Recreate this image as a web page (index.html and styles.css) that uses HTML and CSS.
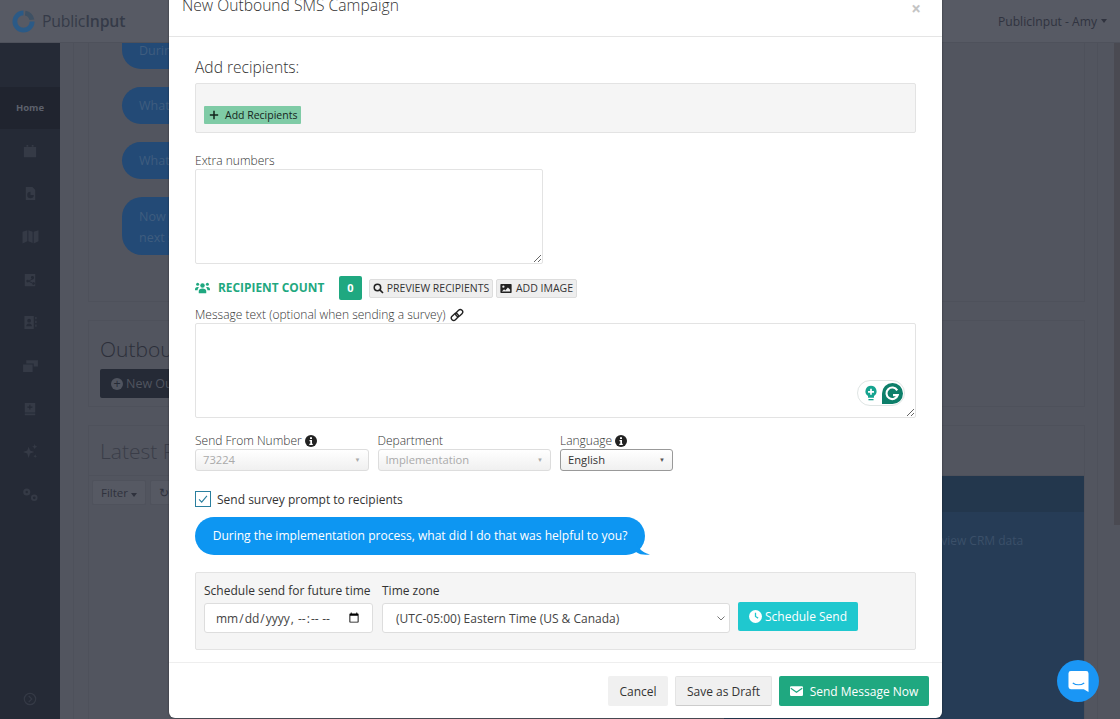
FILE: index.html
```html
<!DOCTYPE html>
<html lang="en">
<head>
<meta charset="utf-8">
<title>New Outbound SMS Campaign</title>
<link rel="stylesheet" href="styles.css">
</head>
<body>
<header class="topbar">
  <div class="logo">
    <svg class="logo-mark" viewBox="0 0 24 24" width="23" height="23"><path d="M12 .5a11.500 11.500 0 1 0 11.500 11.500h-5A6.500 6.500 0 1 1 12 5.500z" fill="#2b5a86"/><path d="M14 .7A11.500 11.500 0 0 1 23.300 10l-5 .5A6.500 6.500 0 0 0 13.500 5.700z" fill="#3e5164"/></svg>
    <span class="logo-text">Public<b>Input</b></span>
  </div>
  <div class="user">PublicInput - Amy <span class="caret"></span></div>
</header>
<div class="shell">
  <nav class="sidebar">
    <div class="side-home">Home</div>
    <ul class="side-icons">
      <li><svg viewBox="0 0 16 16" width="14" height="14"><path d="M1 3.500h14V15H1zM4 1h2v2H4zM10 1h2v2h-2z"/></svg></li>
      <li><svg viewBox="0 0 16 16" width="15" height="15"><path fill-rule="evenodd" d="M3 1h7l3 3v11H3zM8 6a3.500 3.500 0 1 0 3.500 3.500H8z"/></svg></li>
      <li><svg viewBox="0 0 16 16" width="17" height="17"><path d="M.5 3.500l4.500-1.500v10.500L.5 14.500zM6 2l4 1.500V14l-4-1.500zM11 3.500L15.500 2v10.500L11 14.500z"/></svg></li>
      <li><svg viewBox="0 0 16 16" width="14" height="14"><path fill-rule="evenodd" d="M2 1h12v14H2zM10.500 3.500a1.500 1.500 0 1 0 .1 3l-4 2a1.500 1.500 0 1 0 0 1.500l4 2a1.500 1.500 0 1 0 .4-1l-3.700-1.800 3.700-1.900a1.500 1.500 0 0 0-.5-3.800z"/></svg></li>
      <li><svg viewBox="0 0 16 16" width="15" height="15"><path fill-rule="evenodd" d="M1.500 1h10v14h-10zM6.500 4a2 2 0 1 0 0 4 2 2 0 0 0 0-4zM3.500 12h6c0-2-1.500-3-3-3s-3 1-3 3zM13 2h1.500v2.500H13zM13 6h1.500v2.500H13zM13 10h1.500v2.500H13z"/></svg></li>
      <li><svg viewBox="0 0 16 16" width="17" height="17"><path d="M1 7h9v7H1zM4 3h11v6h-4V6H4z"/></svg></li>
      <li><svg viewBox="0 0 16 16" width="14" height="14"><path fill-rule="evenodd" d="M2 1h12v11H2zM7.200 3v2.200H5v1.300h2.200v2.200h1.300V6.500h2.200V5.200H8.500V3zM2 13.200h12V15H2z"/></svg></li>
      <li><svg viewBox="0 0 16 16" width="15" height="15"><path d="M6 3l1.500 4L12 8.500 7.500 10 6 15l-1.500-5L0 8.500 4.500 7zM12.500 0l.8 2 2 .8-2 .8-.8 2-.8-2-2-.8 2-.8zM13 11l.6 1.400 1.400.6-1.400.6L13 15l-.6-1.400-1.400-.6 1.400-.6z"/></svg></li>
      <li><svg viewBox="0 0 18 16" width="17" height="15"><path fill-rule="evenodd" d="M5 1.500a3.800 3.800 0 1 0 0 7.600 3.800 3.800 0 0 0 0-7.600zM5 4a1.300 1.300 0 1 1 0 2.600A1.300 1.300 0 0 1 5 4z"/><path fill-rule="evenodd" d="M13 8a3.500 3.500 0 1 0 0 7 3.500 3.500 0 0 0 0-7zM13 10a1.500 1.500 0 1 1 0 3 1.500 1.500 0 0 1 0-3z"/></svg></li>
    </ul>
    <div class="side-toggle"><svg viewBox="0 0 16 16" width="14" height="14"><circle cx="8" cy="8" r="6.500" fill="none" stroke-width="1.400"/><path d="M6.500 4.500L10 8l-3.500 3.500" fill="none" stroke-width="1.400"/></svg></div>
  </nav>
  <main class="content">
    <div class="content-inner">
      <section class="card chat-card">
        <div class="chat-bubble">During the implementation process</div>
        <div class="chat-bubble">What did I do that was helpful</div>
        <div class="chat-bubble">What could be improved</div>
        <div class="chat-bubble tall">Now that you have finished, what is the<br>next step for your team</div>
      </section>
      <section class="card outbound-card">
        <h2 class="bg-title">Outbound SMS</h2>
        <div class="bg-new"><span class="bg-plus">+</span>New Outbound</div>
      </section>
      <section class="card latest-card">
        <h2 class="bg-title latest-title">Latest Responses</h2>
        <div class="toolbar">
          <span class="bg-tool">Filter <span class="caret"></span></span>
          <span class="bg-tool">&#8635;</span>
        </div>
        <div class="table">
          <div class="table-head"></div>
          <div class="table-row">Review CRM data</div>
        </div>
      </section>
    </div>
  </main>
  <div class="scrollbar"></div>
</div>

<div class="modal" role="dialog">
  <div class="modal-head">
    <h1 class="modal-title">New Outbound SMS Campaign</h1>
    <span class="modal-close">×</span>
  </div>
  <div class="modal-body">
    <h3 class="section-title">Add recipients:</h3>
    <div class="well recipients-well">
      <button class="btn-add"><svg viewBox="0 0 12 12" width="10" height="10"><path d="M5.100 1h1.800v4.100H11v1.800H6.900V11H5.100V6.900H1V5.100h4.100z" fill="#12231b"/></svg>Add Recipients</button>
    </div>
    <label class="field-label extra-label">Extra numbers</label>
    <textarea class="area extra-area"></textarea>

    <div class="count-row">
      <svg class="count-icon" viewBox="0 0 20 16" width="15" height="12"><g fill="#1fa880"><circle cx="10" cy="4.500" r="3"/><circle cx="3.500" cy="3" r="2"/><circle cx="16.500" cy="3" r="2"/><path d="M5 15v-3c0-2 2-3.500 5-3.500s5 1.500 5 3.500v3zM0 10c0-2 1-3.500 3.500-3.500 1 0 1.500.3 2 .7C4 8.200 3.500 9.500 3.500 11H0zM20 10c0-2-1-3.500-3.500-3.500-1 0-1.500.3-2 .7 1.500 1 2 2.300 2 3.800H20z"/></g></svg>
      <span class="count-label">RECIPIENT COUNT</span>
      <span class="count-badge">0</span>
      <button class="btn-mini preview"><svg viewBox="0 0 16 16" width="11" height="11"><circle cx="6.500" cy="6.500" r="4.700" fill="none" stroke="#222" stroke-width="2.200"/><path d="M10 10l4.500 4.500" stroke="#222" stroke-width="2.400"/></svg>PREVIEW RECIPIENTS</button>
      <button class="btn-mini add-image"><svg viewBox="0 0 16 14" width="12" height="11"><path d="M1.500 1h13a1 1 0 0 1 1 1v10a1 1 0 0 1-1 1h-13a1 1 0 0 1-1-1V2a1 1 0 0 1 1-1z" fill="#222"/><circle cx="4.500" cy="4.500" r="1.500" fill="#eee"/><path d="M2.500 11l3-3 1.500 1.500L10.500 5.500l3 3V11z" fill="#eee"/></svg>ADD IMAGE</button>
    </div>

    <label class="field-label message-label">Message text (optional when sending a survey)
      <svg viewBox="0 0 16 16" width="14" height="14" class="link-icon"><g fill="none" stroke="#222" stroke-width="1.600"><rect x="1" y="7.500" width="9" height="5.500" rx="2.750" transform="rotate(-45 5.500 10.250)"/><rect x="6" y="3" width="9" height="5.500" rx="2.750" transform="rotate(-45 10.500 5.750)"/></g></svg>
    </label>
    <div class="message-wrap">
      <textarea class="area message-area"></textarea>
      <div class="grammarly">
        <svg viewBox="0 0 16 20" width="14" height="17"><path d="M8 1a6.500 6.500 0 0 0-3.500 12v2h7v-2A6.500 6.500 0 0 0 8 1z" fill="#15a38f"/><path d="M7 4.500h2V7h2.500v2H9v2.500H7V9H4.500V7H7z" fill="#fff"/><path d="M5 16.500h6V18H5z" fill="#15a38f"/></svg>
        <span class="g-mark"><svg viewBox="0 0 20 20" width="21" height="21"><path d="M10 0a10 10 0 0 1 0 20H0V10A10 10 0 0 1 10 0z" fill="#0d7f6a"/><path d="M14.500 7A5.500 5.500 0 1 0 15 11.500h-4.500" fill="none" stroke="#fff" stroke-width="2"/></svg></span>
      </div>
    </div>

    <div class="select-row">
      <div class="select-field from">
        <label class="field-label">Send From Number <svg class="info" viewBox="0 0 12 12" width="12" height="12"><circle cx="6" cy="6" r="6" fill="#222"/><path d="M5 2.300h2v1.700H5zM4.500 5h2.500v3.700h.8V10H4.300V8.700h1V6.300h-.8z" fill="#fff"/></svg></label>
        <div class="fake-select disabled"><span>73224</span><i>▼</i></div>
      </div>
      <div class="select-field dept">
        <label class="field-label">Department</label>
        <div class="fake-select disabled"><span>Implementation</span><i>▼</i></div>
      </div>
      <div class="select-field lang">
        <label class="field-label">Language <svg class="info" viewBox="0 0 12 12" width="12" height="12"><circle cx="6" cy="6" r="6" fill="#222"/><path d="M5 2.300h2v1.700H5zM4.500 5h2.500v3.700h.8V10H4.300V8.700h1V6.300h-.8z" fill="#fff"/></svg></label>
        <div class="fake-select active"><span>English</span><i>▼</i></div>
      </div>
    </div>

    <div class="check-row">
      <span class="checkbox"><svg viewBox="0 0 16 16" width="14" height="14"><path d="M3.500 8.500l3 3 6-7" fill="none" stroke="#2a7f9e" stroke-width="1.300"/></svg></span>
      <span class="check-text">Send survey prompt to recipients</span>
    </div>

    <div class="bubble-wrap">
      <div class="bubble">During the implementation process, what did I do that was helpful to you?</div>
      <svg class="bubble-tail" viewBox="0 0 14 14" width="14" height="14"><path d="M0 0c1 6 5 11 14 13.500C9 14 4 14 0 11z" fill="#0d96f2"/></svg>
    </div>

    <div class="well schedule-well">
      <div class="schedule-col when">
        <label class="schedule-label">Schedule send for future time</label>
        <input class="control date" type="datetime-local">
      </div>
      <div class="schedule-col zone">
        <label class="schedule-label">Time zone</label>
        <select class="control tz"><option>(UTC-05:00) Eastern Time (US &amp; Canada)</option></select>
      </div>
      <button class="btn-schedule"><svg viewBox="0 0 14 14" width="13" height="13"><circle cx="7" cy="7" r="7" fill="#fff"/><path d="M6.300 3h1.400v3.700l2.500 1.500-.7 1.100-3.200-2z" fill="#1fc8cf"/></svg>Schedule Send</button>
    </div>
  </div>
  <div class="modal-foot">
    <button class="btn-foot cancel">Cancel</button>
    <button class="btn-foot draft">Save as Draft</button>
    <button class="btn-foot send"><svg viewBox="0 0 16 12" width="13" height="10"><rect width="16" height="12" rx="1.500" fill="#fff"/><path d="M1 2.500l7 5 7-5" fill="none" stroke="#1fa880" stroke-width="1.500"/></svg>Send Message Now</button>
  </div>
</div>

<button class="chat-launcher" aria-label="Chat">
  <svg viewBox="0 0 22 24" width="21" height="23"><path d="M3 1h16a2.500 2.500 0 0 1 2.500 2.500V23l-5-3H3A2.500 2.500 0 0 1 .5 17.500v-14A2.500 2.500 0 0 1 3 1z" fill="#fff"/><path d="M5 13.500c3.500 2.500 8.500 2.500 12 0" fill="none" stroke="#1a96f5" stroke-width="1.300"/></svg>
</button>
</body>
</html>
```
FILE: styles.css
```css
* { box-sizing: border-box; }
html, body { margin: 0; height: 719px; overflow: hidden; }
body {
  font-family: "Open Sans", "Liberation Sans", sans-serif;
  background: #52555f;
  color: #333;
  position: relative;
}
button { font-family: inherit; cursor: pointer; }
h1, h2, h3 { margin: 0; font-weight: 400; }

/* Dimmed page behind the dialog */
.topbar {
  height: 43px;
  background: #575a64;
  border-bottom: 1px solid #4e515b;
  display: flex;
  align-items: center;
  justify-content: space-between;
  padding: 0 13px 0 12px;
}
.logo { display: flex; align-items: center; gap: 7px; }
.logo-text { font-size: 15.800px; color: #353a48; letter-spacing: -.2px; }
.logo-text b { font-weight: 600; }
.user { font-size: 12.100px; color: #30333f; display: flex; align-items: center; gap: 4px; }
.caret {
  display: inline-block;
  width: 0; height: 0;
  border-left: 3.500px solid transparent;
  border-right: 3.500px solid transparent;
  border-top: 4px solid currentColor;
}
.shell { display: flex; height: 676px; }
.sidebar {
  width: 60px;
  flex: none;
  background: #252a36;
  padding-top: 44px;
  display: flex;
  flex-direction: column;
}
.side-home {
  height: 42px;
  background: #20242f;
  color: #5c606b;
  font-size: 9.500px;
  font-weight: 700;
  display: flex;
  align-items: center;
  justify-content: center;
  padding-bottom: 1px;
}
.side-icons { list-style: none; margin: 0; padding: 0; display: flex; flex-direction: column; }
.side-icons li { height: 43px; display: flex; align-items: center; justify-content: center; }
.side-icons svg { fill: #353a46; }
.side-toggle { margin-top: auto; height: 27px; display: flex; justify-content: center; }
.side-toggle svg { stroke: #353a46; }

.content { flex: 1; min-width: 0; overflow: hidden; padding: 0 16px 0 13px; }
.content-inner {
  height: 100%;
  border-left: 1px solid #4e515b;
  border-right: 1px solid #4e515b;
  padding: 0 12px 0 14px;
  display: flex;
  flex-direction: column;
  gap: 18px;
}
.card { border: 1px solid #4e515b; }
.chat-card {
  height: 260px;
  flex: none;
  margin-top: -1px;
  padding: 0 0 0 33px;
  display: flex;
  flex-direction: column;
  gap: 18px;
}
.chat-bubble {
  width: 500px;
  height: 37px;
  border-radius: 19px;
  background: #234a76;
  color: #3f5d7f;
  font-size: 12.500px;
  line-height: 37px;
  padding-left: 17px;
  white-space: nowrap;
}
.chat-bubble:first-child { height: 26px; line-height: 15px; border-radius: 0 0 19px 19px; }
.chat-bubble.tall { height: 58px; line-height: 21px; padding-top: 9px; border-radius: 20px; }
.outbound-card { height: 87px; flex: none; padding: 13px 0 0 11px; }
.bg-title { font-size: 21px; font-weight: 300; color: #2c2f3a; line-height: 30px; white-space: nowrap; }
.bg-new {
  margin-top: 5px;
  width: 200px;
  height: 29px;
  background: #252a36;
  color: #50545f;
  font-size: 12.500px;
  line-height: 29px;
  padding-left: 11px;
  border-radius: 2px;
}
.bg-plus {
  display: inline-block;
  width: 12px; height: 12px;
  line-height: 11px;
  border-radius: 50%;
  background: #50545f;
  color: #252a36;
  text-align: center;
  margin-right: 3px;
}
.latest-card { flex: 1; border-bottom: 0; padding-top: 10px; position: relative; }
.latest-title { padding-left: 11px; color: #3a3d48; padding-bottom: 9px; border-bottom: 1px solid #4e515b; }
.toolbar { display: flex; gap: 4px; padding: 4px 0 0 3px; }
.bg-tool {
  height: 25px;
  padding: 0 8px;
  background: #565963;
  border: 1px solid #4f525c;
  border-radius: 2px;
  font-size: 11.500px;
  color: #2f323d;
  line-height: 24px;
  white-space: nowrap;
}
.table {
  position: absolute;
  top: 50px;
  right: 0;
  bottom: 0;
  width: 360px;
  background: #263c56;
}
.table-head { height: 36px; background: #23374d; }
.table-row { padding: 20px 0 0 203px; font-size: 12px; line-height: 17px; color: #3b5069; white-space: nowrap; }
.scrollbar { width: 6px; flex: none; background: #4a4a52; height: 482px; }

/* Dialog */
.modal {
  position: absolute;
  left: 169px;
  top: -17px;
  width: 773px;
  height: 735px;
  background: #fff;
  border-radius: 0 0 6px 6px;
  box-shadow: 0 0 2px rgba(0, 0, 0, .5);
  display: flex;
  flex-direction: column;
}
.modal-head {
  height: 54px;
  flex: none;
  border-bottom: 1px solid #e5e5e5;
  padding: 12px 21px 0 13px;
  display: flex;
  justify-content: space-between;
}
.modal-title { font-size: 15.650px; font-weight: 300; line-height: 20px; color: #333; }
.modal-close { font-size: 17px; color: #c4c4c4; line-height: 24px; font-weight: 700; margin-top: 2px; }
.modal-body { flex: 1; padding: 19px 26px 0; min-height: 0; }
.section-title { font-size: 15.600px; font-weight: 300; line-height: 22px; color: #333; }
.well { background: #f5f5f5; border: 1px solid #e3e3e3; border-radius: 2px; }
.recipients-well { height: 50px; margin-top: 5px; padding: 22px 0 0 8px; }
.btn-add {
  height: 18px;
  width: 97px;
  padding: 0 0 0 5px;
  background: #7fcba6;
  border: 0;
  border-radius: 1px;
  font-size: 10.500px;
  color: #15251d;
  display: flex;
  align-items: center;
  gap: 6px;
}
.field-label { display: block; font-size: 12px; font-weight: 300; color: #333; line-height: 17px; white-space: nowrap; }
.extra-label { margin-top: 19px; }
.area {
  display: block;
  background: #fff;
  border: 1px solid #e3e3e3;
  border-radius: 2px;
  padding: 6px;
  margin: 0;
  font-family: inherit;
}
.extra-area { width: 348px; height: 95px; }
.count-row { display: flex; align-items: center; height: 24px; margin-top: 12px; }
.count-icon { margin-right: 8px; }
.count-label { font-size: 11.900px; font-weight: 700; color: #1fa880; width: 121px; white-space: nowrap; position: relative; top: -1px; }
.count-badge {
  width: 23px; height: 24px;
  background: #1fa880;
  color: #fff;
  border-radius: 2px;
  font-size: 11px;
  font-weight: 700;
  text-align: center;
  line-height: 24px;
  margin-right: 7px;
}
.btn-mini {
  height: 19px;
  padding: 0;
  background: #eee;
  border: 1px solid #ddd;
  border-radius: 2px;
  font-size: 10.500px;
  color: #333;
  display: flex;
  align-items: center;
  justify-content: center;
  gap: 3px;
  white-space: nowrap;
}
.preview { width: 124px; margin-right: 3px; }
.add-image { width: 81px; gap: 4px; }
.message-label { margin-top: 6px; line-height: 17px; }
.link-icon { vertical-align: -3px; margin-left: 1px; }
.message-wrap { position: relative; }
.message-area { width: 721px; height: 95px; }
.grammarly {
  position: absolute;
  right: 11px;
  top: 57px;
  width: 48px;
  height: 26px;
  background: #fff;
  border: 1px solid #dfe5e4;
  border-radius: 13px;
  display: flex;
  align-items: center;
  justify-content: flex-end;
  gap: 4px;
  padding-right: 1px;
}
.g-mark { display: flex; }
.select-row { display: flex; gap: 9px; margin-top: 14px; }
.select-field .field-label { height: 17px; }
.info { vertical-align: -2px; margin-left: 0; }
.from, .dept { width: 173.500px; }
.lang { width: 113px; }
.fake-select {
  height: 22px;
  border: 1px solid #ddd;
  border-radius: 3px;
  background: linear-gradient(#fff, #f0f0f0);
  font-size: 11.200px;
  line-height: 20px;
  padding: 0 7px;
  display: flex;
  justify-content: space-between;
  color: #aaa;
}
.fake-select i { font-style: normal; font-size: 6px; color: #aaa; }
.fake-select.active { border-color: #999; color: #333; }
.fake-select.active i { color: #555; }
.check-row { display: flex; align-items: center; gap: 6px; margin-top: 20px; height: 16px; }
.checkbox {
  width: 16px; height: 16px;
  border: 1px solid #2a7f9e;
  display: flex;
  align-items: center;
  justify-content: center;
}
.check-text { font-size: 12px; color: #333; }
.bubble-wrap { position: relative; margin-top: 10px; width: 450px; }
.bubble {
  height: 38px;
  width: 450px;
  border-radius: 19px;
  background: #0d96f2;
  color: #fff;
  font-size: 12.050px;
  line-height: 38px;
  text-align: center;
  white-space: nowrap;
}
.bubble-tail { position: absolute; right: -5px; bottom: 0; }
.schedule-well {
  height: 78px;
  margin-top: 17px;
  padding: 8px 8px 0;
  display: flex;
  gap: 9px;
}
.schedule-label { display: block; font-size: 12px; line-height: 20px; color: #333; white-space: nowrap; margin-bottom: 2px; }
.when { width: 169px; }
.zone { width: 348px; }
.control {
  display: block;
  width: 100%;
  height: 30px;
  background: #fff;
  border: 1px solid #ddd;
  border-radius: 3px;
  font-family: inherit;
  font-size: 12px;
  color: #444;
  margin: 0;
}
.date { padding: 0 10px; }
.tz {
  padding: 0 13px;
  appearance: none;
  background: #fff url("data:image/svg+xml,%3Csvg xmlns='http://www.w3.org/2000/svg' width='8' height='5'%3E%3Cpath d='M.5.5L4 4 7.500.5' fill='none' stroke='%23777'/%3E%3C/svg%3E") no-repeat right 4px center;
}
.btn-schedule {
  align-self: flex-start;
  width: 120px;
  height: 29px;
  margin: 21px 0 0 -1px;
  background: #1fc8cf;
  border: 0;
  border-radius: 2px;
  color: #fff;
  font-size: 12px;
  display: flex;
  align-items: center;
  justify-content: center;
  gap: 3px;
  white-space: nowrap;
}
.modal-foot {
  height: 56px;
  flex: none;
  border-top: 1px solid #eee;
  padding: 13px 13px 0 0;
  display: flex;
  justify-content: flex-end;
  gap: 7px;
}
.btn-foot { height: 30px; padding: 0; border: 0; border-radius: 2px; font-size: 12px; color: #333; }
.cancel { width: 60px; background: #f0f0f0; }
.draft { width: 97px; background: #f0f0f0; border: 1px solid #e4e4e4; border-bottom-color: #ccc; }
.send {
  width: 150px;
  background: #1fa880;
  color: #fff;
  display: flex;
  align-items: center;
  justify-content: center;
  gap: 7px;
}
.chat-launcher {
  position: absolute;
  left: 1057px;
  top: 660px;
  width: 42px;
  height: 42px;
  border: 0;
  padding: 0;
  border-radius: 50%;
  background: #1a96f5;
  display: flex;
  align-items: center;
  justify-content: center;
}
```
